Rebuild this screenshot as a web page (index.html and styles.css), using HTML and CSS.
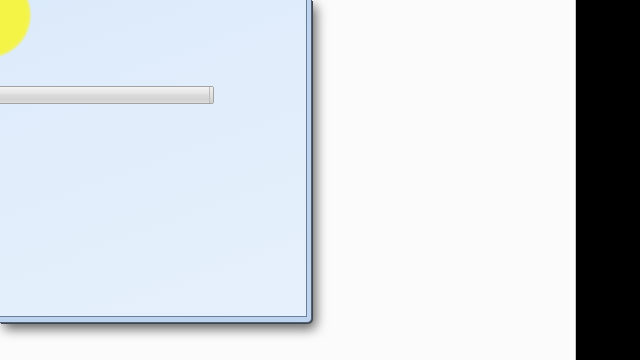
FILE: index.html
```html
<!DOCTYPE html>
<html>
<head>
<meta charset="utf-8">
<link rel="stylesheet" href="styles.css">
</head>
<body>
<div class="screen">
  <div class="desktop">
    <div class="window">
      <div class="client">
        <div class="highlight"></div>
        <div class="progress"><div class="cap"></div></div>
      </div>
    </div>
  </div>
  <div class="edge"></div>
  <div class="black"></div>
</div>
</body>
</html>
```
FILE: styles.css
```css
html, body {
  margin: 0;
  padding: 0;
  width: 640px;
  height: 360px;
  overflow: hidden;
  background: #fbfbfb;
}
.screen {
  display: flex;
  width: 640px;
  height: 360px;
}
.desktop {
  width: 575px;
  height: 360px;
  background: #fbfbfb;
}
.edge {
  width: 1px;
  height: 360px;
  background: #c8c8c8;
}
.black {
  flex: 1;
  background: #000;
}
.window {
  position: relative;
  width: 306px;
  height: 316px;
  border-right: 1px solid #536070;
  border-bottom: 1px solid #536070;
  border-bottom-right-radius: 5px;
  background: #bdd3ee;
  padding: 0 5px 6px 0;
  box-shadow: 1px 1px 0 #3e4654, 4px 6px 12px rgba(0, 0, 0, 0.6);
}
.client {
  position: relative;
  width: 307px;
  height: 317px;
  overflow: hidden;
  border-right: 1px solid #6b7f99;
  border-bottom: 1px solid #6b7f99;
  box-sizing: border-box;
  background: linear-gradient(160deg, #dbeafa 0%, #e1edfb 40%, #e6f0fc 100%);
  padding-top: 86px;
}
.highlight {
  position: absolute;
  left: -56px;
  top: -29px;
  width: 88px;
  height: 88px;
  border-radius: 50%;
  background: radial-gradient(closest-side, #f4f446 86%, #f2f25c 93%, rgba(240, 240, 150, 0) 100%);
}
.progress {
  position: relative;
  width: 216px;
  height: 18px;
  margin-left: -2px;
  box-sizing: border-box;
  border: 1px solid #a3a3a3;
  border-radius: 2px;
  background: linear-gradient(180deg, #f3f3f3 0%, #e6e6e6 35%, #d9d9d9 55%, #d3d3d3 80%, #dddddd 100%);
}
.cap {
  position: absolute;
  right: 0;
  top: 0;
  width: 3px;
  height: 16px;
  border-left: 1px solid #bdbdbd;
  background: linear-gradient(180deg, #f0f0f0, #d0d0d0);
}
```
